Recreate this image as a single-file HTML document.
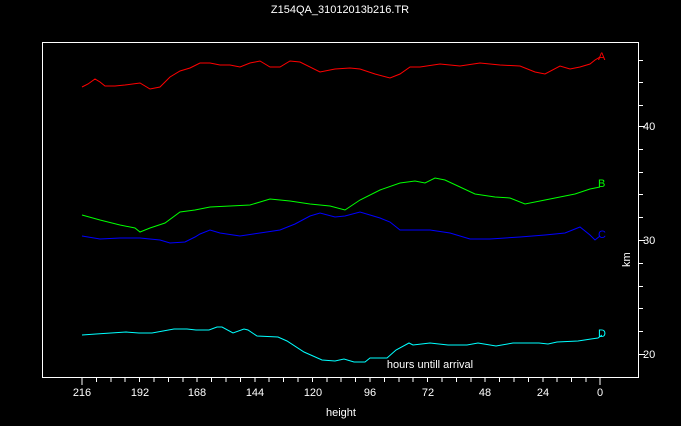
<!DOCTYPE html>
<html><head><style>
html,body{margin:0;padding:0;background:#000;}
body{width:681px;height:421px;overflow:hidden;}
svg text{font-family:"Liberation Sans",sans-serif;fill:#fff;font-size:11px;}
</style></head><body>
<svg width="681" height="421" xmlns="http://www.w3.org/2000/svg" shape-rendering="crispEdges">
<text x="340" y="13" text-anchor="middle">Z154QA_31012013b216.TR</text>
<rect x="42.5" y="42.5" width="596" height="335" fill="none" stroke="#fff" stroke-width="1"/>
<g stroke="#fff" stroke-width="1">
<path d="M82 378v7M96.4 378v4M110.8 378v4M125.2 378v4M139.6 378v4M154 378v4M168.4 378v4M182.8 378v4M197.2 378v4M211.6 378v4M226 378v4M240.4 378v4M254.8 378v4M269.2 378v4M283.6 378v4M298 378v4M312.4 378v4M326.8 378v4M341.2 378v4M355.6 378v4M370 378v4M384.4 378v4M398.8 378v4M413.2 378v4M427.6 378v4M442 378v4M456.4 378v4M470.8 378v4M485.2 378v4M499.6 378v4M514 378v4M528.4 378v4M542.8 378v4M557.2 378v4M571.6 378v4M586 378v4M600 378v7"/>
<path d="M639 60.5h4M639 82.5h4M639 105.5h4M639 126.5h6M639 149.5h4M639 172.5h4M639 194.5h4M639 217.5h4M639 240.5h6M639 263.5h4M639 286.5h4M639 308.5h4M639 331.5h4M639 354.5h6"/>
</g>
<g text-anchor="middle">
<text x="82" y="396">216</text><text x="140" y="396">192</text><text x="197" y="396">168</text><text x="255" y="396">144</text><text x="313" y="396">120</text><text x="370" y="396">96</text><text x="428" y="396">72</text><text x="485" y="396">48</text><text x="543" y="396">24</text><text x="600" y="396">0</text>
</g>
<text x="643" y="130">40</text><text x="643" y="244">30</text><text x="643" y="358">20</text>
<text x="341" y="416" text-anchor="middle">height</text>
<text x="430" y="368" text-anchor="middle">hours untill arrival</text>
<text transform="translate(630,267) rotate(-90)">km</text>
<g fill="none" stroke-width="1" shape-rendering="auto">
<polyline stroke="#ff0000" points="82,87 88,84 95,79 100,82 105,86 115,86 125,85 140,83 150,89 160,87 170,77 180,71 190,68 200,63 210,63 220,65 230,65 240,67 250,63 260,61 270,67 280,67 290,61 300,62 320,72 335,69 350,68 360,69 375,74 390,78 400,74 410,67 420,67 440,64 460,66 480,63 500,65 520,66 535,72 545,74 560,66 570,69 580,67 590,64 595,60 600,57"/>
<polyline stroke="#00ff00" points="82,215 100,220 120,225 135,228 140,232 150,228 165,223 180,212 195,210 210,207 230,206 250,205 270,199 290,201 310,204 330,206 345,210 360,200 380,190 400,183 415,181 425,183 435,178 445,180 460,187 475,194 495,197 510,198 525,204 545,200 560,197 575,194 590,189 600,187"/>
<polyline stroke="#0000ff" points="82,236 100,239 120,238 140,238 160,240 170,243 185,242 195,237 200,234 210,230 220,233 240,236 260,233 280,230 295,224 310,216 320,213 335,217 345,216 360,212 380,218 390,222 400,230 430,230 450,233 470,239 490,239 520,237 545,235 565,233 580,227 590,235 595,240 600,236"/>
<polyline stroke="#00ffff" points="82,335 96,334 126,332 139,333 152,333 174,329 187,329 196,330 209,330 217,327 222,327 233,333 244,329 248,330 257,336 278,337 287,341 304,352 322,360 335,361 344,359 354,362 365,362 370,358 387,358 396,350 409,343 413,345 430,343 448,345 467,345 478,343 496,346 513,343 539,343 548,344 557,342 578,341 591,339 598,338 602,335"/>
</g>
<text x="598" y="60" style="fill:#ff0000">A</text>
<text x="598" y="187" style="fill:#00ff00">B</text>
<text x="598" y="238" style="fill:#0000ff">C</text>
<text x="598" y="337" style="fill:#00ffff">D</text>
</svg>
</body></html>
